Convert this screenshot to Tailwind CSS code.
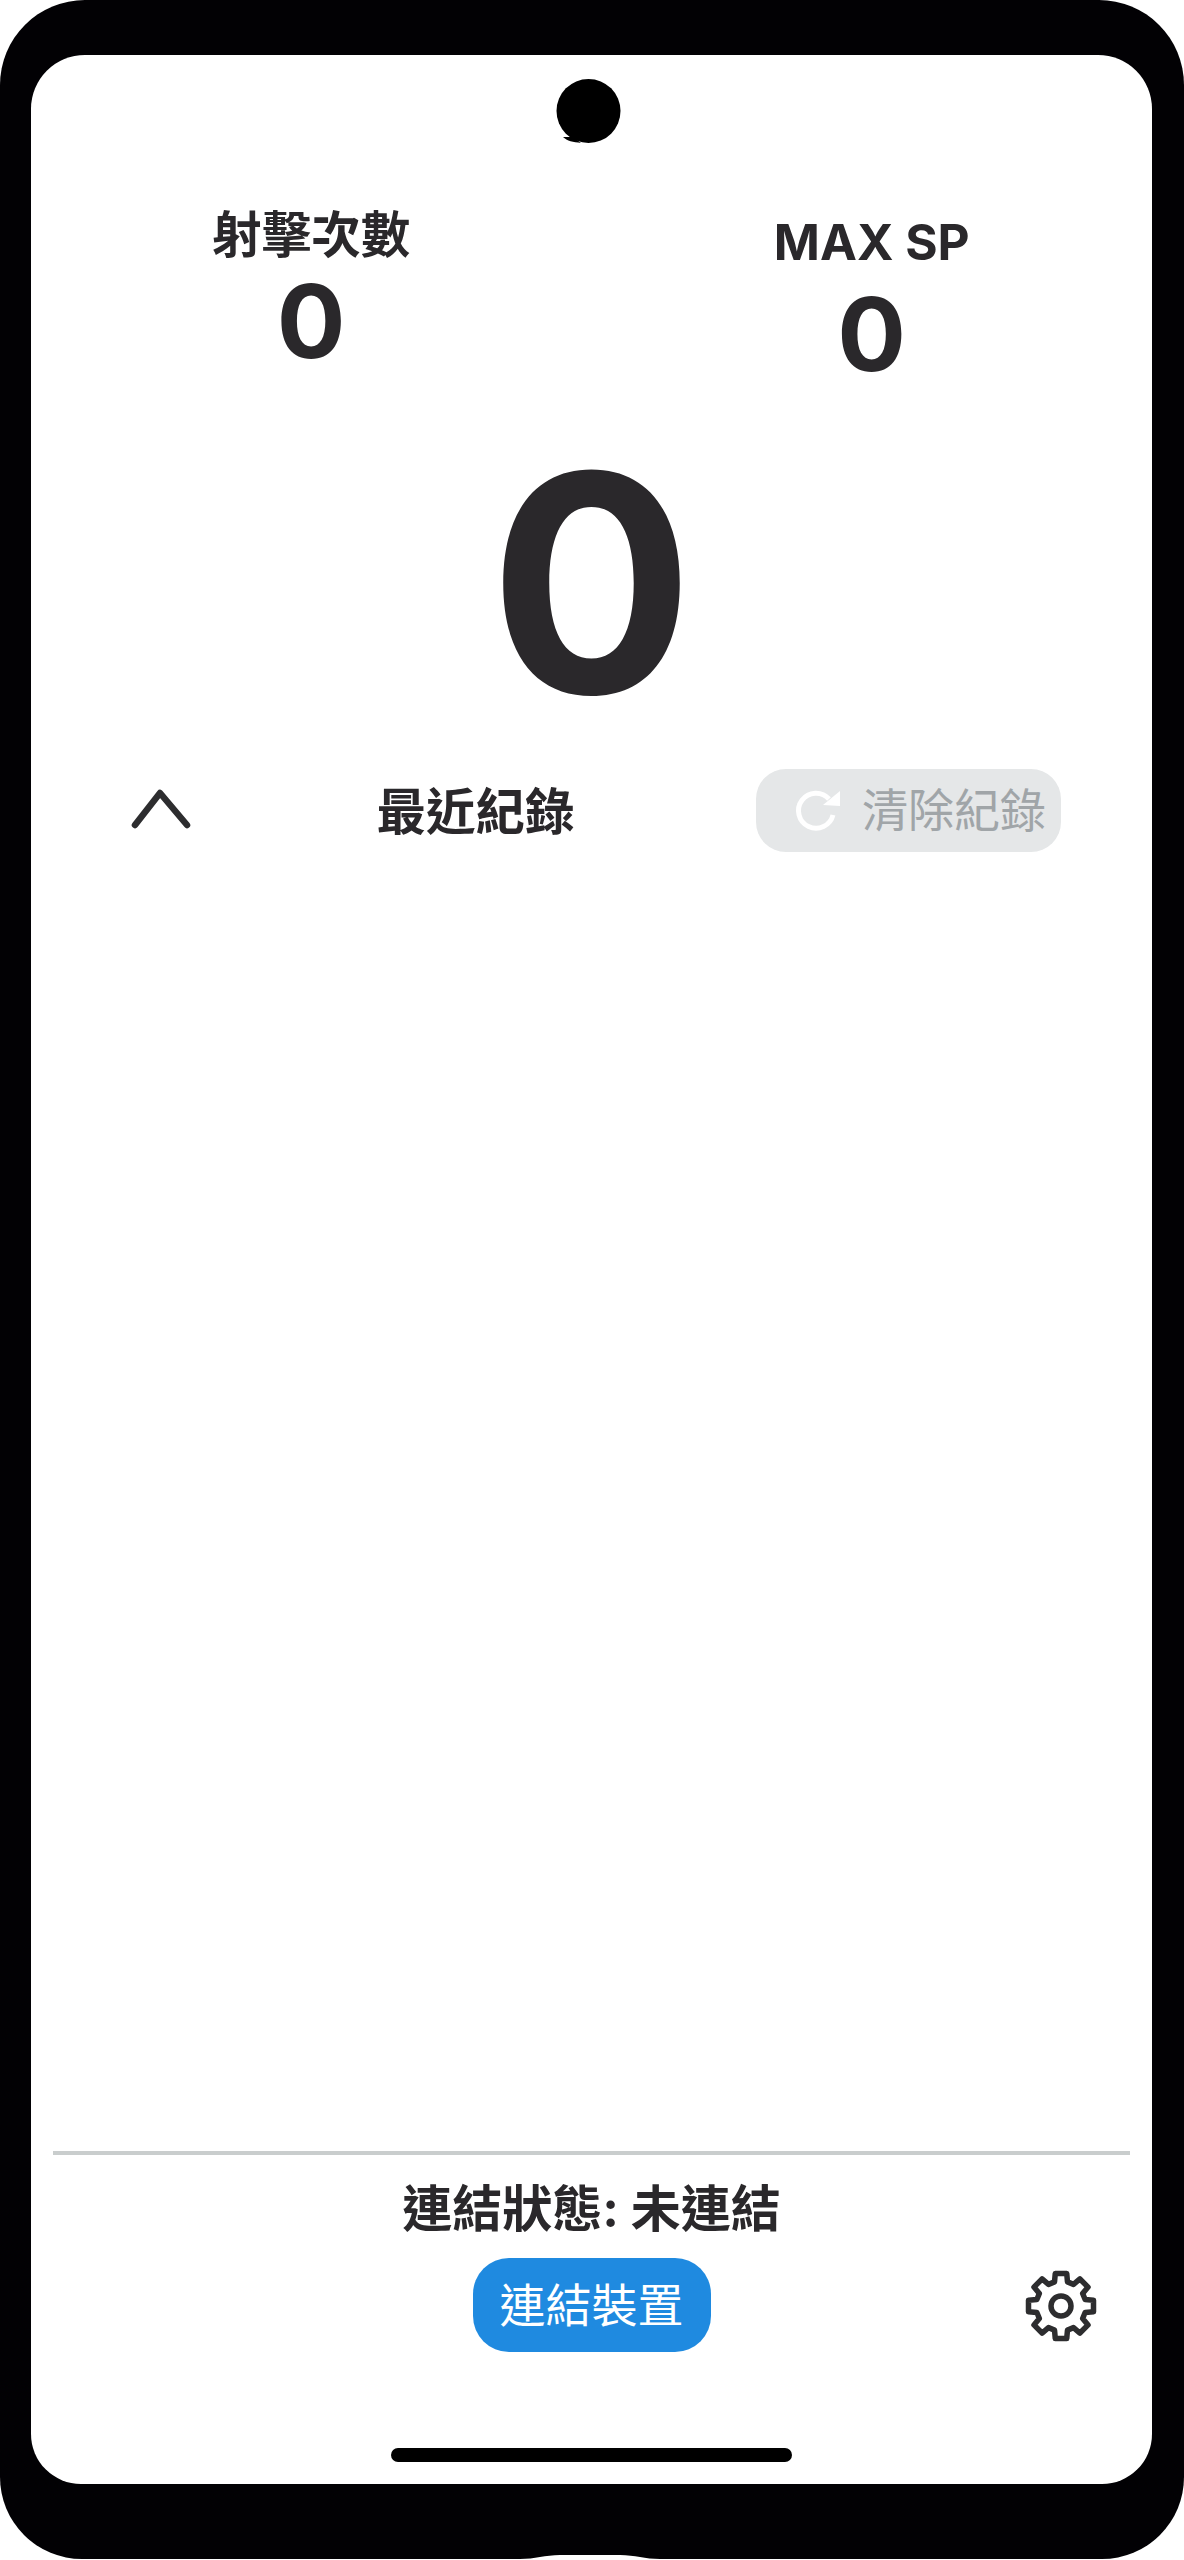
<!DOCTYPE html>
<html lang="zh-Hant">
<head>
    <meta charset="UTF-8">
    <meta name="viewport" content="width=device-width, initial-scale=1.0">
    <title>射擊次數</title>
    <script src="https://cdn.jsdelivr.net/npm/@tailwindcss/browser@4"></script>
</head>
<body class="bg-white font-['Inter','Noto_Sans_CJK_TC',sans-serif] text-[#2a282b]">

    <!-- phone frame -->
    <div class="relative w-[1184px] h-[2559px] bg-[#020104] rounded-t-[85px] rounded-b-[82px] overflow-hidden pt-[55px] px-[31px]">
        <div class="relative w-[1121px] h-[2429px] bg-white rounded-t-[54px] rounded-b-[50px] flex flex-col">

            <!-- camera -->
            <svg class="absolute left-[522px] top-[22px] w-[70px] h-[70px]" viewBox="0 0 70 70" fill="#000000">
                <circle cx="35.5" cy="34" r="32"></circle>
                <path d="M10 60 C14 64 20 65 28 66 L20 60 Z"></path>
            </svg>

            <!-- counters -->
            <div class="grid grid-cols-2 pt-[150px]">
                <div class="flex flex-col items-center">
                    <div class="text-[49.5px] leading-[60px] font-bold">射擊次數</div>
                    <div class="text-[102px] leading-[106px] font-bold mt-[3px]">0</div>
                </div>
                <div class="flex flex-col items-center pt-[7px]">
                    <div class="text-[49.5px] leading-[60px] font-bold">MAX SP</div>
                    <div class="text-[102px] leading-[106px] font-bold mt-[9px]">0</div>
                </div>
            </div>

            <!-- current score -->
            <div class="text-center text-[303px] leading-[300px] font-bold mt-[46px]">0</div>

            <!-- history header -->
            <div class="flex items-center justify-between pl-[96px] pr-[91px] mt-[36px] h-[83px]">
                <svg class="w-[66px] h-[48px] mb-[8px]" viewBox="0 0 66 48" fill="none" stroke="#2d2d2f" stroke-width="6.5" stroke-linecap="round" stroke-linejoin="round">
                    <path d="M8 42 L33 10 L60 42"></path>
                </svg>
                <div class="text-[49.5px] leading-[60px] font-bold mt-[2px] ml-[2px]">最近紀錄</div>
                <button class="flex items-center h-[83px] w-[305px] pl-[37px] gap-[19px] rounded-[30px] bg-[#e5e7e8] text-[#a0a5a8] text-[46px]">
                    <svg class="w-[50px] h-[50px] mb-[5px]" viewBox="0 0 50 50" fill="none" stroke="#ffffff" stroke-width="5">
                        <path d="M36 16 A17.5 17.5 0 1 0 40 32"></path>
                        <path d="M47 8 L47 23 L30 22 Z" fill="#ffffff" stroke="none"></path>
                    </svg>
                    <span>清除紀錄</span>
                </button>
            </div>

            <div class="flex-1"></div>

            <!-- connection -->
            <div class="mx-[22px] h-[4px] bg-[#c9cdcd]"></div>
            <div class="text-center text-[50px] leading-[60px] font-bold mt-[24px]">連結狀態: 未連結</div>
            <div class="relative flex justify-center mt-[19px]">
                <button class="w-[238px] h-[94px] rounded-[36px] bg-[#1f8ae0] text-white text-[46px]">連結裝置</button>
                <svg class="absolute left-[994px] top-[12px] w-[72px] h-[72px]" viewBox="-36 -36 72 72" fill="none" stroke="#2d2d2f" stroke-width="5.5" stroke-linejoin="round">
                    <polygon points="-6.47,-24.15 -5.73,-32.5 5.73,-32.5 6.47,-24.15 12.5,-21.65 18.93,-27.03 27.03,-18.93 21.65,-12.5 24.15,-6.47 32.5,-5.73 32.5,5.73 24.15,6.47 21.65,12.5 27.03,18.93 18.93,27.03 12.5,21.65 6.47,24.15 5.73,32.5 -5.73,32.5 -6.47,24.15 -12.5,21.65 -18.93,27.03 -27.03,18.93 -21.65,12.5 -24.15,6.47 -32.5,5.73 -32.5,-5.73 -24.15,-6.47 -21.65,-12.5 -27.03,-18.93 -18.93,-27.03 -12.5,-21.65"></polygon>
                    <circle cx="0" cy="0" r="10"></circle>
                </svg>
            </div>

            <!-- home bar -->
            <div class="mx-auto w-[401px] h-[14px] rounded-full bg-black mt-[96px] mb-[22px]"></div>
        </div>

        <!-- notch in the bottom edge of the frame -->
        <svg class="absolute left-[520px] bottom-0 w-[140px] h-[5px]" viewBox="0 0 140 5" fill="#ffffff">
            <path d="M0 5 C15 5 25 1 40 1 L100 1 C115 1 125 5 140 5 Z"></path>
        </svg>
    </div>
</body>
</html>
